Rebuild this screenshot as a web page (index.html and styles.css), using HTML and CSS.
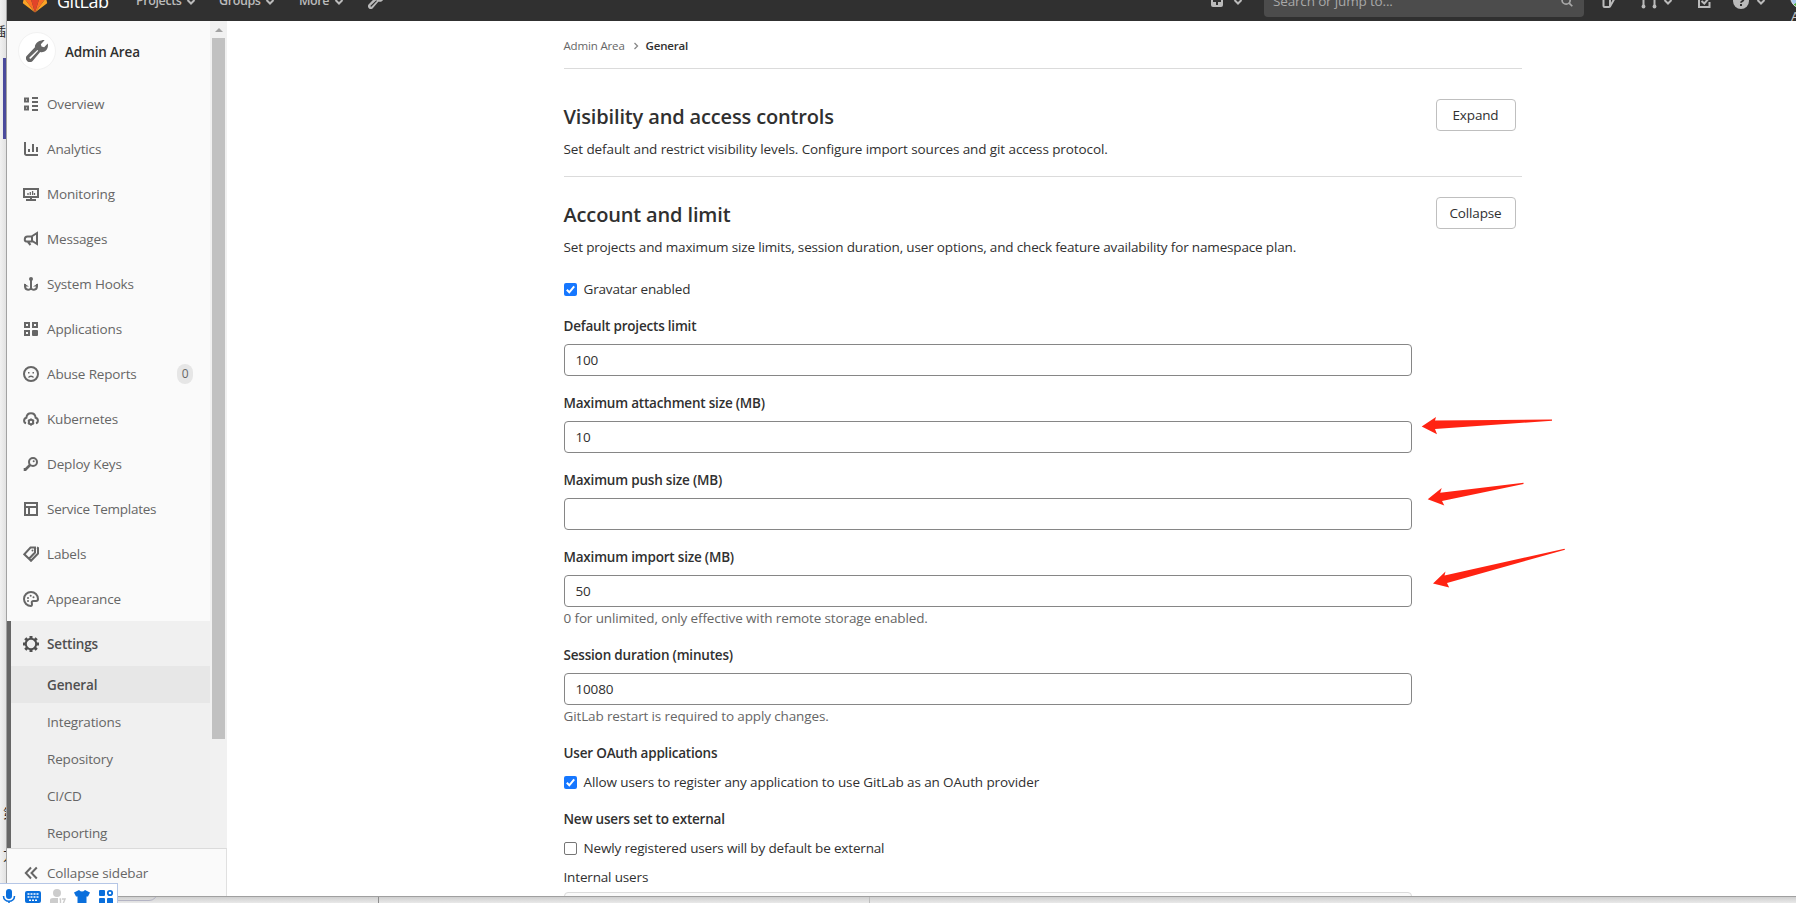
FILE: index.html
```html
<!DOCTYPE html>
<html lang="en">
<head>
<meta charset="utf-8">
<title>General · Admin Area · GitLab</title>
<link rel="stylesheet" href="styles.css">
</head>
<body>
<div class="desktop">
  <div class="edge">
    <span class="edge-accent"></span>
    <span class="edge-text edge-text-a">插</span>
    <span class="edge-text edge-text-b">第</span>
    <span class="edge-text edge-text-c">方</span>
  </div>
  <div class="window">
    <header class="navbar">
      <svg class="logo" viewBox="0 0 24 24"><path fill="#e24329" d="M12 23.5 16.5 9h-9z"/><path fill="#fc6d26" d="M12 23.5 7.500 9H1z M12 23.500 16.500 9H23z"/><path fill="#fca326" d="M1 9-.1 13.500a1 1 0 0 0 .3 1L12 23.500z M23 9l1.100 4.500a1 1 0 0 1-.3 1L12 23.500z"/><path fill="#e24329" d="M1 9h6.500L4.500.5z M23 9h-6.500L19.500.5z"/></svg>
      <span class="brand">GitLab</span>
      <nav class="menu">
        <span class="menu-item menu-projects">Projects</span><svg class="chev" viewBox="0 0 10 10"><path d="M1.500 3 5 6.500 8.500 3"/></svg>
        <span class="menu-item menu-groups">Groups</span><svg class="chev" viewBox="0 0 10 10"><path d="M1.500 3 5 6.500 8.500 3"/></svg>
        <span class="menu-item menu-more">More</span><svg class="chev" viewBox="0 0 10 10"><path d="M1.500 3 5 6.500 8.500 3"/></svg>
        <svg class="icon nav-wrench" viewBox="0 0 16 16"><use href="#wrench"/></svg>
      </nav>
      <svg class="icon nav-plus" viewBox="0 0 16 16"><path fill="currentColor" fill-rule="evenodd" d="M4 2h8a2 2 0 0 1 2 2v8a2 2 0 0 1-2 2H4a2 2 0 0 1-2-2V4a2 2 0 0 1 2-2zm3 2v3H4v2h3v3h2V9h3V7H9V4z"/></svg>
      <svg class="chev" viewBox="0 0 10 10"><path d="M1.500 3 5 6.500 8.500 3"/></svg>
      <div class="search"><span>Search or jump to...</span><svg class="icon search-icon" viewBox="0 0 16 16"><g class="ln"><circle cx="7" cy="7" r="4.600"/><path d="m10.500 10.500 3.500 3.500"/></g></svg></div>
      <svg class="icon nav-issues" viewBox="0 0 16 16"><g class="ln"><path d="M10 2H3.500a1 1 0 0 0-1 1v10a1 1 0 0 0 1 1H8a1 1 0 0 0 1-1V3M9 13.500l4.800-8.500"/></g></svg>
      <svg class="icon nav-mr" viewBox="0 0 16 16"><g class="ln"><path d="M2.500 3v10M13.500 13V5.500a2 2 0 0 0-2-2H9"/></g><circle cx="2.500" cy="13.500" r="1.900" fill="currentColor"/><circle cx="13.500" cy="13.500" r="1.900" fill="currentColor"/></svg>
      <svg class="chev" viewBox="0 0 10 10"><path d="M1.500 3 5 6.500 8.500 3"/></svg>
      <svg class="icon nav-todo" viewBox="0 0 16 16"><g class="ln"><path d="M9 2H3v12h10.500V9M5.500 8l2.800 2.500L14 4"/></g></svg>
      <svg class="icon nav-help" viewBox="0 0 16 16"><circle cx="8" cy="8" r="8" fill="currentColor"/><path d="M5.700 6.300a2.400 2.400 0 1 1 3.300 2c-.7.3-1 .6-1 1.400" fill="none" stroke="#303030" stroke-width="1.800"/><rect x="7" y="11" width="2" height="2" fill="#303030"/></svg>
      <svg class="chev" viewBox="0 0 10 10"><path d="M1.500 3 5 6.500 8.500 3"/></svg>
      <div class="avatar"><i></i><span>A</span></div>
    </header>
    <div class="body">
      <aside class="sidebar">
        <div class="scroller">
          <div class="list">
            <div class="context"><span class="context-icon"><svg viewBox="0 0 16 16"><use href="#wrench"/></svg></span><b>Admin Area</b></div>
            <a class="item"><svg class="icon" viewBox="0 0 16 16"><g class="ln"><path d="M2 2.500h3v3H2zM2 10.500h3v3H2zM9 2h6M9 6h6M9 10h6M9 14h6"/></g></svg><span>Overview</span></a>
            <a class="item"><svg class="icon" viewBox="0 0 16 16"><g class="ln"><path d="M2 1v11.500a1.500 1.500 0 0 0 1.500 1.500H15M6 11V8M10 11V3M14 11V6"/></g></svg><span>Analytics</span></a>
            <a class="item"><svg class="icon" viewBox="0 0 16 16"><g class="ln"><path d="M1 3h14v8H1zM8 11v3M3 14h10"/><path stroke-width="1.300" d="M5 9V7M7.300 9V6M9.600 9V5M11.500 9V7"/></g></svg><span>Monitoring</span></a>
            <a class="item"><svg class="icon" viewBox="0 0 16 16"><g class="ln"><path d="M14 2v11l-4-2.500H3.500A2 2 0 0 1 1.800 8.300C1.800 6.500 3 5.500 4.500 5.500h4zM9 5v5M5 11l2.500 3"/></g></svg><span>Messages</span></a>
            <a class="item"><svg class="icon" viewBox="0 0 16 16"><g class="ln"><path d="M8 3v10M8 11.500c0 3-6 3.500-6-1.500V8M8 11.500c0 3 6 3.500 6-1.500V8"/></g><circle cx="8" cy="3" r="2" fill="currentColor"/><path fill="currentColor" d="M1 7.500l5 3H1zM15 7.500l-5 3h5z"/></svg><span>System Hooks</span></a>
            <a class="item"><svg class="icon" viewBox="0 0 16 16"><g class="ln"><path d="M2 2h4v4H2zM10 2h4v4h-4zM2 10h4v4H2z"/></g><rect x="9" y="9" width="6" height="6" rx="1" fill="currentColor"/></svg><span>Applications</span></a>
            <a class="item"><svg class="icon" viewBox="0 0 16 16"><g class="ln"><circle cx="8" cy="8" r="7"/><path stroke-width="1.500" d="M5.500 11.500c1-1.800 4-1.800 5 0"/></g><path fill="currentColor" d="M5 6h1.500v1.500H5zM9.500 6H11v1.500H9.500z"/></svg><span>Abuse Reports</span><em class="count">0</em></a>
            <a class="item"><svg class="icon" viewBox="0 0 16 16"><g class="ln"><path d="M3 12.200C.5 11.500.3 7.500 3.400 6.700 4 .8 12 .8 12.600 6.700c3.100.8 2.900 4.800.4 5.500"/><circle cx="8" cy="11" r="2.200"/><path stroke-width="1.400" d="M8 7.500v1.300M8 13.200v1.500M4.900 9.200l1.200.7M9.900 12.100l1.200.7M11.100 9.200l-1.200.7M6.100 12.100l-1.200.7"/></g></svg><span>Kubernetes</span></a>
            <a class="item"><svg class="icon" viewBox="0 0 16 16"><g class="ln"><circle cx="10" cy="6" r="4"/><path stroke-width="2.600" d="M7 9l-5 5M2 12v3"/></g><circle cx="10.700" cy="5.300" r="1" fill="currentColor"/></svg><span>Deploy Keys</span></a>
            <a class="item"><svg class="icon" viewBox="0 0 16 16"><g class="ln"><path d="M2 2h12v12H2zM2 6h12M6 6v8"/></g></svg><span class="tight">Service Templates</span></a>
            <a class="item"><svg class="icon" viewBox="0 0 16 16"><g class="ln"><path d="M7.500 1.500H12v5L6 12.800 1.300 8.300zM14 1.500 15 2v5.500L8 14.800l-2-2"/></g><circle cx="9.500" cy="4.500" r="1" fill="currentColor"/></svg><span>Labels</span></a>
            <a class="item"><svg class="icon" viewBox="0 0 16 16"><g class="ln"><path d="M8 15A7 7 0 1 1 15 8c0 1.500-.8 2-2 2h-2.500C9 10 8.500 11 8.800 12c.4 1.500.2 3-.8 3z"/></g><g fill="currentColor"><circle cx="5" cy="10" r="1"/><circle cx="5" cy="7" r="1"/><circle cx="7.700" cy="4.800" r="1"/><circle cx="10.500" cy="6.300" r="1"/></g></svg><span>Appearance</span></a>
            <div class="active-group">
              <a class="item item-active"><svg class="icon" viewBox="0 0 16 16"><g class="ln"><circle cx="8" cy="8" r="5.200"/></g><path stroke="currentColor" stroke-width="3" d="M8 0v2.600M8 13.400V16M0 8h2.600M13.400 8H16M2.300 2.300l1.900 1.900M11.800 11.800l1.900 1.900M13.700 2.300l-1.900 1.900M4.200 11.800l-1.900 1.900"/></svg><span>Settings</span></a>
              <a class="sub sub-active">General</a>
              <a class="sub">Integrations</a>
              <a class="sub">Repository</a>
              <a class="sub">CI/CD</a>
              <a class="sub">Reporting</a>
            </div>
          </div>
          <div class="scrollbar"><i class="scroll-up"></i><i class="scroll-thumb"></i></div>
        </div>
        <div class="collapse"><svg class="icon" viewBox="0 0 16 16"><g class="ln"><path d="M8 2.500 2.800 8 8 13.500M13.800 2.500 8.500 8l5.300 5.500"/></g></svg><span>Collapse sidebar</span></div>
      </aside>
      <main class="main">
        <div class="content">
          <div class="crumbs"><span class="crumb-parent">Admin Area</span><svg viewBox="0 0 8 8"><path d="M2.500 1 5.500 4l-3 3"/></svg><b>General</b></div>
          <section class="section section-first">
            <div class="section-text"><h4>Visibility and access controls</h4><p class="wide">Set default and restrict visibility levels. Configure import sources and git access protocol.</p></div>
            <button class="btn">Expand</button>
          </section>
          <section class="section section-second">
            <div class="section-text"><h4>Account and limit</h4><p>Set projects and maximum size limits, session duration, user options, and check feature availability for namespace plan.</p></div>
            <button class="btn">Collapse</button>
          </section>
          <form class="form">
            <div class="check check-first"><i class="box box-on"><svg viewBox="0 0 13 13"><path d="m2.800 6.800 2.500 2.500 4.900-6"/></svg></i><span>Gravatar enabled</span></div>
            <div class="label">Default projects limit</div><div class="input">100</div>
            <div class="label">Maximum attachment size (MB)</div><div class="input">10</div>
            <div class="label">Maximum push size (MB)</div><div class="input"></div>
            <div class="label">Maximum import size (MB)</div><div class="input">50</div>
            <div class="help">0 for unlimited, only effective with remote storage enabled.</div>
            <div class="label">Session duration (minutes)</div><div class="input">10080</div>
            <div class="help">GitLab restart is required to apply changes.</div>
            <div class="label">User OAuth applications</div>
            <div class="check"><i class="box box-on"><svg viewBox="0 0 13 13"><path d="m2.800 6.800 2.500 2.500 4.900-6"/></svg></i><span class="wide">Allow users to register any application to use GitLab as an OAuth provider</span></div>
            <div class="label">New users set to external</div>
            <div class="check"><i class="box"></i><span>Newly registered users will by default be external</span></div>
            <div class="plain">Internal users</div>
            <div class="input input-muted"></div>
          </form>
        </div>
      </main>
    </div>
  </div>
  <div class="under"><i class="under-pill"></i><i class="under-a"></i><i class="under-b"></i></div>

  <svg class="arrows" viewBox="0 0 1796 903"><path d="M1421.700 426.400 1436 417l-1 3.500 117-1v1.300L1435 429l2 5.300zM1427.700 499.300l14-11.300-1.500 4.700 83.300-10v1.200L1442 501l2.300 4.600zM1433 583.500l12.500-12-1 4 120-26.800.5 1L1447 583l2.200 4.600z"/></svg>

  <div class="ime">
    <svg viewBox="0 0 16 16"><rect x="5" y="0" width="6" height="10" rx="3" fill="currentColor"/><path d="M2.500 7c0 7 11 7 11 0M8 12v4" fill="none" stroke="currentColor" stroke-width="1.600"/></svg>
    <svg viewBox="0 0 16 16"><rect x="0" y="2" width="16" height="12" rx="2" fill="currentColor"/><path d="M2.500 5h11M2.500 8h11M4 11.200h8" stroke="#fff" stroke-width="1.600" stroke-dasharray="2 1"/></svg>
    <svg class="ime-off" viewBox="0 0 16 16"><circle cx="7" cy="4" r="4" fill="currentColor"/><path d="M0 14V11q0-2 3-2h5v5z" fill="currentColor"/><path d="M9.500 10h1v5M12 10h3l-2 5" fill="none" stroke="currentColor" stroke-width="1.400"/></svg>
    <svg viewBox="0 0 16 16"><path d="M5 1q3 3 6 0l5 2.500L14 7.500h-1.500V15h-9V7.500H2L0 3.500z" fill="currentColor"/></svg>
    <svg viewBox="0 0 16 16"><g fill="currentColor"><rect x="1" y="1" width="6" height="6" rx="1"/><rect x="1" y="9" width="6" height="6" rx="1"/><rect x="9" y="9" width="6" height="6" rx="1"/></g><circle cx="12" cy="4" r="2.200" fill="none" stroke="currentColor" stroke-width="1.800"/></svg>
  </div>
</div>
<svg class="defs"><defs><g id="wrench"><path fill="currentColor" fill-rule="evenodd" d="M11.200.4c1-.4 1.800-.4 2.300-.2L10.800 3l.5 1.800 1.900.4L15.800 2.500c.5 2.200-.1 4-1.300 5.200-1.200 1.100-2.800 1.400-4.200 1L4.800 15.200a2.900 2.900 0 0 1-4 0 2.900 2.900 0 0 1 0-4L6.500 5.300C6.300 3 8.500.9 11.200.4zM8.300 7.300 2.700 12.500a.6.600 0 0 0 .9.900L8.900 7.900z"/></g></defs></svg>
</body>
</html>
```

FILE: styles.css
```css
* { box-sizing: border-box; }
body {
  margin: 0;
  font-family: "Open Sans", "Noto Sans", sans-serif;
  font-size: 13.500px;
  line-height: 20px;
  color: #303030;
  letter-spacing: -0.16px;
}
.desktop {
  position: relative;
  display: grid;
  grid-template-columns: 7px 1789px;
  grid-template-rows: 896px 7px;
  width: 1796px;
  height: 903px;
  overflow: hidden;
  background: #fff;
}
.defs { position: absolute; width: 0; height: 0; }
.ln { fill: none; stroke: currentColor; stroke-width: 2; }
.icon { width: 16px; height: 16px; flex: none; }
.wide { letter-spacing: -0.1px; }
.tight { letter-spacing: -0.26px; }

/* strip of the page behind the browser window */
.edge {
  position: relative;
  overflow: hidden;
  background: linear-gradient(90deg, #f1f1f1, #e2e2e2);
  border-right: 1px solid #a2a2a2;
}
.edge-accent { position: absolute; left: 3px; top: 58px; width: 3px; height: 81px; background: #4a4a9c; }
.edge-text { position: absolute; font: 13px/16px "Noto Sans CJK SC", sans-serif; color: #222; }
.edge-text-a { left: -7px; top: 23px; }
.edge-text-b { left: 3px; top: 805px; }
.edge-text-c { left: 3px; top: 847px; }
.under {
  grid-column: 1 / 3;
  position: relative;
  overflow: hidden;
  background: linear-gradient(#cfcfcf, #e9e9e9);
  border-top: 1px solid #a0a0a0;
}
.under-pill { position: absolute; left: 60px; top: -14px; width: 98px; height: 18px; border: 1px solid #b4b4c4; border-radius: 9px; }
.under-a { position: absolute; left: 378px; top: 0; width: 1px; height: 7px; background: #8d8d8d; }
.under-b { position: absolute; left: 869px; top: 0; width: 1px; height: 7px; background: #bdbdbd; }

.window { display: flex; flex-direction: column; overflow: hidden; }

/* top bar, scrolled partly out of the window */
.navbar {
  flex: none;
  display: flex;
  align-items: center;
  height: 40px;
  margin-top: -19px;
  padding-left: 16px;
  background: #303030;
  color: #bababa;
}
.logo { width: 24px; height: 24px; flex: none; margin-top: -1px; overflow: visible; }
.brand { flex: none; width: 79px; padding-left: 10px; color: #fff; font-size: 18px; line-height: 22px; letter-spacing: -0.5px; }
.menu { flex: none; display: flex; align-items: center; width: 1083px; padding-left: 10px; font-weight: 600; }
.menu-item { flex: none; font-size: 12.500px; letter-spacing: -0.4px; }
.menu-projects { width: 50px; }
.menu-groups { width: 46px; margin-left: 23px; }
.menu-more { width: 35px; margin-left: 24px; }
.chev { width: 10px; height: 10px; flex: none; margin-top: 2px; fill: none; stroke: currentColor; stroke-width: 2; }
.nav-wrench { margin-left: 24px; }
.nav-plus { margin-right: 8px; }
.search {
  display: flex;
  align-items: center;
  justify-content: space-between;
  flex: none;
  width: 320px;
  height: 32px;
  margin-left: 21px;
  padding: 0 10px 0 9px;
  border-radius: 4px;
  background: #4c4c4c;
  color: #a8a8a8;
}
.search-icon { width: 14px; height: 14px; color: #a8a8a8; }
.nav-issues { margin-left: 17px; }
.nav-mr { margin: 0 6px 0 24px; }
.nav-todo { margin: 0 21px 0 23px; }
.nav-help { margin-right: 7px; }
.avatar { position: relative; width: 24px; height: 40px; margin-left: 24px; flex: none; }
.avatar i { position: absolute; left: 0; top: 4px; width: 24px; height: 24px; border: 1px solid #ddd; border-radius: 50%; background: linear-gradient(155deg, #a9c8ee 60%, #4db33d 61%); }
.avatar span { position: absolute; left: 1px; top: 25px; color: #ccc; }

.body { display: flex; flex: 1; min-height: 0; }
.sidebar { display: flex; flex-direction: column; width: 220px; flex: none; background: #fafafa; color: #666; box-shadow: inset -1px 0 0 #e4e4e4; }
.scroller { display: flex; flex: 1; min-height: 0; overflow: hidden; }
.list { width: 203px; }
.context { display: flex; align-items: center; gap: 9px; height: 60px; padding-left: 11px; color: #303030; }
.context b { padding-top: 2px; font-weight: 600; }
.context-icon { display: flex; align-items: center; justify-content: center; width: 38px; height: 38px; border-radius: 50%; background: #fff; border: 1px solid #f2f2f2; color: #666; }
.context-icon svg { width: 22px; height: 22px; }
.item { display: flex; align-items: center; gap: 8px; height: 45px; padding: 0 17px 0 16px; }
.item span { padding-top: 1px; }
.count { margin-left: auto; width: 16px; height: 20px; border-radius: 8px; background: #e6e6e6; font-style: normal; font-size: 12px; text-align: center; }
.active-group { background: #f0f0f0; border-left: 4px solid #666; height: 240px; }
.item-active { padding-left: 12px; font-weight: 600; color: #4f4f4f; }
.sub { display: flex; align-items: center; height: 37px; padding: 1px 0 0 36px; }
.sub-active { background: #e7e7e7; font-weight: 600; color: #4f4f4f; }
.scrollbar { display: flex; flex-direction: column; align-items: center; width: 17px; background: #f1f1f1; }
.scroll-up { width: 0; height: 0; margin: 7px 0 6px; border: 4px solid transparent; border-top: 0; border-bottom-color: #a3a3a3; }
.scroll-thumb { width: 13px; height: 701px; background: #c1c1c1; }
.collapse { display: flex; align-items: center; gap: 8px; height: 48px; flex: none; padding: 0 0 0 16px; background: #fafafa; border-top: 1px solid #dbdbdb; border-right: 1px solid #e0e0e0; }

.main { flex: 1; overflow: hidden; background: #fff; }
.content { width: 958px; margin-left: 336.500px; }
.crumbs { display: flex; align-items: center; height: 48px; padding: 17px 0 14px; border-bottom: 1px solid #dbdbdb; font-size: 11.500px; line-height: 16px; }
.crumb-parent { width: 62px; color: #666; white-space: nowrap; }
.crumbs svg { width: 8px; height: 8px; margin: 0 6px; fill: none; stroke: #888; stroke-width: 1.300; }
.crumbs b { font-weight: 600; }
.section { display: flex; justify-content: space-between; align-items: flex-start; padding-right: 6px; }
.section-first { height: 108px; padding-top: 30px; border-bottom: 1px solid #dbdbdb; }
.section-second { height: 80px; padding-top: 20px; }
.section-text { padding-top: 6px; }
h4 { margin: 0 0 10px; font-size: 20px; line-height: 24px; font-weight: 600; letter-spacing: -0.15px; }
p { margin: 0; }
.btn { width: 80px; height: 32px; padding: 0; border: 1px solid #bfbfbf; border-radius: 4px; background: #fff; color: #303030; font: inherit; letter-spacing: inherit; }
.form { width: 848px; }
.check { display: flex; align-items: center; gap: 7px; height: 20px; margin-top: 9px; }
.check-first { margin-top: 22px; }
.box { display: block; width: 13px; height: 13px; border: 1px solid #767676; border-radius: 2px; background: #fff; }
.box-on { border: 0; background: #1677ff; }
.box svg { display: block; width: 13px; height: 13px; fill: none; stroke: #fff; stroke-width: 2; }
.label { margin-top: 17px; height: 20px; font-weight: 600; letter-spacing: -0.2px; }
.input { height: 32px; margin-top: 8px; padding: 5px 11px; border: 1px solid #868686; border-radius: 4px; background: #fff; }
.help { height: 20px; margin-top: 1px; color: #666; letter-spacing: -0.13px; }
.plain { height: 20px; margin-top: 9px; }
.input-muted { margin-top: 5px; border-color: #dbdbdb; background: #fafafa; }

.arrows { position: absolute; left: 0; top: 0; width: 1796px; height: 903px; fill: #ff2312; }
.ime {
  position: absolute;
  left: 0;
  top: 883px;
  display: flex;
  gap: 8.250px;
  width: 118px;
  height: 22px;
  padding: 5px 0 0 1px;
  background: #fff;
  border: 1px solid #b5c6e6;
  border-left: 0;
  color: #0a6fdc;
}
.ime svg { width: 16px; height: 16px; flex: none; }
.ime .ime-off { color: #ccc; }
```
